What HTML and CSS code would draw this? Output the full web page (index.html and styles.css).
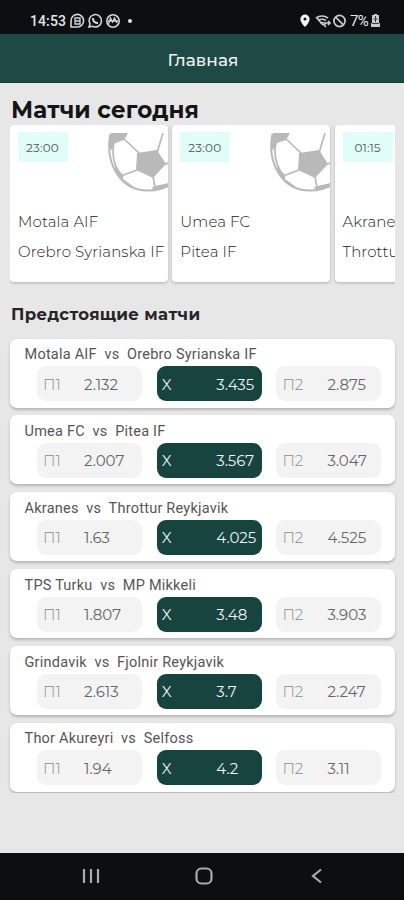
FILE: index.html
```
<!DOCTYPE html>
<html lang="ru">
<head>
<meta charset="utf-8">
<title>Главная</title>
<link rel="stylesheet" href="styles.css">
</head>
<body>
<svg class="defs" aria-hidden="true">
  <symbol id="ball" viewBox="0 0 60 60">
    <g fill="none" stroke="#b9b9b9" stroke-width="1.7">
      <path d="M2.500 1C-3 27 10 58 41 57.500Q53 57.500 61 52" stroke-width="2"/>
      <path d="M7 5C3 19 5 33 15 44M16 6L31 20M49 20L55 0M29 37L13 43M45 43L47 55M57 31L61 30M44 55Q53 55 61 51"/>
    </g>
    <path fill="#b9b9b9" d="M3 0H20L16 7L7 10L3 18Q0 10 3 0ZM29 20L49 17L58 31L45 45L28 37ZM6 33L15 42L15 46L26 54Q12 51 6 33ZM47 53L61 50V54L44 58Z"/>
  </symbol>
</svg>
<div class="status">
  <div class="status-left">
    <span class="clock">14:53</span>
    <svg width="51" height="16" viewBox="0 0 51 16" fill="none" stroke="#d4d6d7" stroke-width="1.600">
      <path d="M1 14V8A6.300 6.300 0 1 1 7.500 14Z"/><path d="M5 5h5v6H5zM5 8h5" stroke-width="1.300"/>
      <path d="M19 14l1-3A6.200 6.200 0 1 1 22.500 13.300Z"/><path d="M23 5c0 3 2 5 5 5" stroke-width="2"/>
      <circle cx="43" cy="8" r="6.200"/><path d="M38.500 11l2-6 2 4 2-4 2.500 5M38 8h10" stroke-width="1.300"/>
    </svg>
    <span class="dot"></span>
  </div>
  <div class="status-right">
    <svg width="48" height="16" viewBox="0 0 48 16" fill="none" stroke="#c9cbcc" stroke-width="1.700">
      <path d="M6 1.500a4.600 4.600 0 0 0-4.600 4.700C1.400 9.500 6 14 6 14s4.600-4.500 4.600-7.800A4.600 4.600 0 0 0 6 1.500Zm0 3a1.500 1.500 0 1 1 0 3 1.500 1.500 0 0 1 0-3Z" fill="#f2f3f3" stroke="none"/>
      <path d="M17 5q6-4 12 0M19 7.500q4-2.500 8 0M21 10q2-1 4 0M17 4l7 8M25 10h6M29 8l2 2-2 2M27 10l-2 2 2 2"/>
      <circle cx="40.500" cy="8" r="5.600"/><path d="M36.700 4.200l7.600 7.600"/>
    </svg>
    <span class="charge">7%</span>
    <svg width="9" height="13" viewBox="0 0 9 13"><path d="M3 0h3v1h2v8h1v4H0V9h1V1h2z" fill="#c9cbcc"/><path d="M4.500 2v6M2.500 5h4M1 9.500h7" stroke="#34383a"/></svg>
  </div>
</div>
<header class="bar"><h1>Главная</h1></header>
<main>
  <h2 class="today">Матчи сегодня</h2>
  <div class="carousel">
    <article class="game"><span class="time">23:00</span><svg class="ball"><use href="#ball"/></svg><p>Motala AIF</p><p>Orebro Syrianska IF</p></article>
    <article class="game"><span class="time">23:00</span><svg class="ball"><use href="#ball"/></svg><p>Umea FC</p><p>Pitea IF</p></article>
    <article class="game"><span class="time narrow">01:15</span><svg class="ball"><use href="#ball"/></svg><p>Akranes</p><p>Throttur</p></article>
  </div>
  <h2 class="upcoming">Предстоящие матчи</h2>
  <div class="list">
    <article class="match"><h3>Motala AIF&nbsp; vs&nbsp; Orebro Syrianska IF</h3><div class="odds"><div class="odd"><b>П1</b><span>2.132</span></div><div class="odd draw"><b>X</b><span>3.435</span></div><div class="odd"><b>П2</b><span>2.875</span></div></div></article>
    <article class="match"><h3>Umea FC&nbsp; vs&nbsp; Pitea IF</h3><div class="odds"><div class="odd"><b>П1</b><span>2.007</span></div><div class="odd draw"><b>X</b><span>3.567</span></div><div class="odd"><b>П2</b><span>3.047</span></div></div></article>
    <article class="match"><h3>Akranes&nbsp; vs&nbsp; Throttur Reykjavik</h3><div class="odds"><div class="odd"><b>П1</b><span>1.63</span></div><div class="odd draw"><b>X</b><span>4.025</span></div><div class="odd"><b>П2</b><span>4.525</span></div></div></article>
    <article class="match"><h3>TPS Turku&nbsp; vs&nbsp; MP Mikkeli</h3><div class="odds"><div class="odd"><b>П1</b><span>1.807</span></div><div class="odd draw"><b>X</b><span>3.48</span></div><div class="odd"><b>П2</b><span>3.903</span></div></div></article>
    <article class="match"><h3>Grindavik&nbsp; vs&nbsp; Fjolnir Reykjavik</h3><div class="odds"><div class="odd"><b>П1</b><span>2.613</span></div><div class="odd draw"><b>X</b><span>3.7</span></div><div class="odd"><b>П2</b><span>2.247</span></div></div></article>
    <article class="match"><h3>Thor Akureyri&nbsp; vs&nbsp; Selfoss</h3><div class="odds"><div class="odd"><b>П1</b><span>1.94</span></div><div class="odd draw"><b>X</b><span>4.2</span></div><div class="odd"><b>П2</b><span>3.11</span></div></div></article>
  </div>
</main>
<nav>
  <svg width="18" height="18" viewBox="0 0 18 18"><path d="M2 2v14M9 2v14M16 2v14"/></svg>
  <svg width="18" height="18" viewBox="0 0 18 18"><rect x="1.500" y="1.500" width="15" height="15" rx="5"/></svg>
  <svg width="18" height="18" viewBox="0 0 18 18"><path d="M13 2.500L5 9l8 6.500"/></svg>
</nav>
</body>
</html>
```
FILE: styles.css
```
* { box-sizing: border-box; margin: 0; padding: 0; }
body {
  width: 404px; height: 900px; overflow: hidden;
  display: flex; flex-direction: column;
  background: #e7e7e7; color: #3c3c3c;
  font-family: Montserrat, Inter, sans-serif;
}
.defs { position: absolute; width: 0; height: 0; }
.status {
  flex: none; height: 34px; padding: 7px 24px 0 30px;
  display: flex; align-items: center; justify-content: space-between;
  background: #0b0f12; color: #e4e6e7;
}
.status-left, .status-right { display: flex; align-items: center; }
.clock { width: 36px; margin-right: 4px; font: 500 14px/16px Roboto, sans-serif; letter-spacing: 0.1px; }
.dot { width: 4px; height: 4px; margin-left: 7px; border-radius: 50%; background: #e4e6e7; }
.charge { width: 20px; margin: 0 1px 0 3px; font: 400 15px/16px Roboto, sans-serif; letter-spacing: -0.7px; }
.bar {
  flex: none; height: 49px; display: flex; align-items: center; justify-content: center;
  background: #1e4944; border-bottom: 1px solid #143b35; padding: 4px 0 0 2px;
}
.bar h1 { font-size: 17px; line-height: 20px; font-weight: 500; color: #eef3f2; letter-spacing: 0.1px; }
main { flex: 1; padding: 0 9px 0 10px; min-height: 0; }
.today { height: 42px; padding: 14px 0 0 1px; font-size: 23px; line-height: 27px; font-weight: 700; color: #151515; letter-spacing: 0.1px; white-space: nowrap; }
.carousel { display: flex; gap: 4.500px; height: 162px; overflow: hidden; }
.game {
  flex: none; width: 157.800px; height: 157px; padding: 7px 0 0 8px;
  display: grid; grid-template: 66px 29.500px 29.500px / 50px 1fr; align-content: start;
  background: #fff; border-radius: 4px; box-shadow: 0 1px 3px rgba(0,0,0,.25); overflow: hidden;
}
.time { width: 50px; height: 30px; line-height: 31px; padding-right: 1px; text-align: center; background: #e0fdf7; color: #555; font-size: 12px; letter-spacing: 0.2px; }
.narrow { letter-spacing: 0; padding: 0; }
.ball { width: 60px; height: 60px; justify-self: end; margin-top: 1px; }
.game p { grid-column: 1 / 3; font-size: 15px; line-height: 29px; height: 29px; padding-top: 9px; font-weight: 300; white-space: nowrap; color: #222; letter-spacing: 0.12px; }
.upcoming { height: 51px; padding: 16px 0 0 1px; font-size: 16.500px; line-height: 22px; font-weight: 700; color: #252525; letter-spacing: 0.35px; white-space: nowrap; }
.list { display: flex; flex-direction: column; gap: 7.900px; height: 454.500px; margin: 0 -9px 0 -10px; padding: 0.500px 9px 0 10px; overflow: hidden; }
.match { flex: none; height: 69px; padding: 6.500px 0 0 14.500px; background: #fff; border-radius: 7px; box-shadow: 0 2px 3px rgba(0,0,0,.22); }
.match h3 { height: 21px; font: 400 14.500px/20px Roboto, sans-serif; letter-spacing: 0.23px; color: #555; white-space: pre; }
.odds { display: grid; grid-template-columns: repeat(3, 105px); gap: 14.700px; padding-left: 12.500px; }
.odd { height: 35px; display: flex; align-items: center; padding: 1px 0 0 6px; border-radius: 9px; background: #f3f3f3; font-size: 15px; color: #666; }
.odd b { width: 41px; font-weight: 300; color: #8c8c8c; }
.odd span { font-weight: 400; }
.odd:last-child b { width: 45px; }
.odd.draw { background: #17443e; color: #f0f4f3; padding-left: 5px; }
.odd.draw b { width: 54.500px; color: #f0f4f3; font-weight: 400; }
nav { flex: none; height: 47px; display: flex; gap: 95px; justify-content: center; align-items: center; padding: 0 0 1px 4px; background: #0b0f12; }
nav svg { fill: none; stroke: #a9acae; stroke-width: 2.200; }
```
